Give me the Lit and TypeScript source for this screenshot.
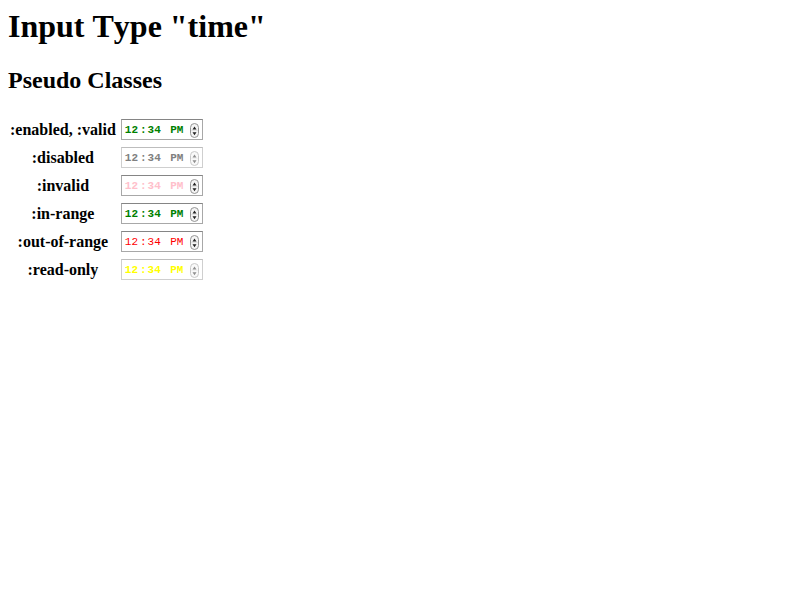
import { LitElement, html, css } from "lit";
import { customElement, property } from "lit/decorators.js";

interface Row {
  id: string;
  label: string;
  kind: string;
  disabled?: boolean;
  readonly?: boolean;
}

const rows: Row[] = [
  { id: "enabled", label: ":enabled, :valid", kind: "valid" },
  { id: "disabled", label: ":disabled", kind: "disabled", disabled: true },
  { id: "invalid", label: ":invalid", kind: "invalid" },
  { id: "in-range", label: ":in-range", kind: "in-range" },
  { id: "out-of-range", label: ":out-of-range", kind: "out-of-range" },
  { id: "read-only", label: ":read-only", kind: "read-only", readonly: true },
];

@customElement("time-field")
export class TimeField extends LitElement {
  static styles = css`
    :host {
      display: block;
    }
    .box {
      box-sizing: border-box;
      display: flex;
      align-items: center;
      justify-content: space-between;
      width: 82px;
      height: 21px;
      padding: 2px 3px 0 2px;
      border: 1px solid #a8a8a8;
      border-top-color: #858585;
      background: #fff;
      color: green;
      font: bold 11px "Liberation Mono", monospace;
    }
    .disabled,
    .read-only {
      border-color: #cfcfcf;
      border-top-color: #bdbdbd;
    }
    .disabled {
      color: #808080;
    }
    .invalid {
      color: pink;
    }
    .out-of-range {
      color: red;
      font-weight: normal;
    }
    .read-only {
      color: yellow;
    }
    .time {
      flex: 1;
      min-width: 0;
      margin: 0;
      padding: 0;
      border: 0;
      outline: 0;
      background: none;
      color: inherit;
      font: inherit;
    }
    .time::-webkit-calendar-picker-indicator {
      display: none;
    }
    .time::-webkit-datetime-edit {
      padding: 0;
      color: inherit;
    }
    .time::-webkit-datetime-edit-fields-wrapper {
      padding: 0;
      color: inherit;
    }
    .time::-webkit-datetime-edit-hour-field,
    .time::-webkit-datetime-edit-minute-field {
      padding: 0 2px 0 1px;
      color: inherit;
    }
    .time::-webkit-datetime-edit-ampm-field {
      padding: 0 0 0 4px;
      color: inherit;
    }
    .time::-webkit-datetime-edit-text {
      padding: 0;
      color: inherit;
    }
    .stepper {
      flex: none;
      display: block;
    }
    .disabled .stepper,
    .read-only .stepper {
      opacity: 0.5;
    }
  `;

  @property() name = "";
  @property() label = "";
  @property() kind = "valid";
  @property({ type: Boolean }) disabled = false;
  @property({ type: Boolean }) readonly = false;

  render() {
    return html`<div class="box ${this.kind}">
      <input
        class="time"
        type="time"
        value="12:34"
        name=${this.name}
        aria-label=${this.label}
        ?disabled=${this.disabled}
        ?readonly=${this.readonly}
      />
      <svg class="stepper" width="9" height="15" viewBox="0 0 9 15" aria-hidden="true">
        <rect x="0.5" y="0.5" width="8" height="14" rx="4" fill="#f4f4f4" stroke="#959595" />
        <path d="M1 7.5H8" stroke="#e4e4e4" />
        <path d="M4.5 3.4L6.5 6.4H2.5ZM4.5 12.2L6.5 9.2H2.5Z" fill="#222" />
      </svg>
    </div>`;
  }
}

@customElement("app-root")
export class AppRoot extends LitElement {
  static styles = css`
    :host {
      display: block;
      padding: 8px;
      background: #fff;
      color: #000;
      font: 16px "Liberation Serif", serif;
    }
    .title {
      margin: 0 0 22px;
      font-size: 32px;
      line-height: 37px;
      font-kerning: none;
    }
    .subtitle {
      margin: 0 0 20px;
      font-size: 24px;
      line-height: 27px;
    }
    .states {
      border-collapse: separate;
      border-spacing: 2px;
    }
    .name {
      box-sizing: border-box;
      height: 26px;
      padding: 2px 0 0;
      line-height: 18px;
    }
    .value {
      padding: 0 3px;
    }
  `;

  render() {
    return html`
      <h1 class="title">Input Type "time"</h1>
      <h2 class="subtitle">Pseudo Classes</h2>
      <table class="states">
        <tbody>
          ${rows.map(
            (r) => html`<tr>
              <th class="name" scope="row">${r.label}</th>
              <td class="value">
                <time-field
                  name=${r.id}
                  label=${r.label}
                  kind=${r.kind}
                  ?disabled=${r.disabled}
                  ?readonly=${r.readonly}
                ></time-field>
              </td>
            </tr>`
          )}
        </tbody>
      </table>
    `;
  }
}
